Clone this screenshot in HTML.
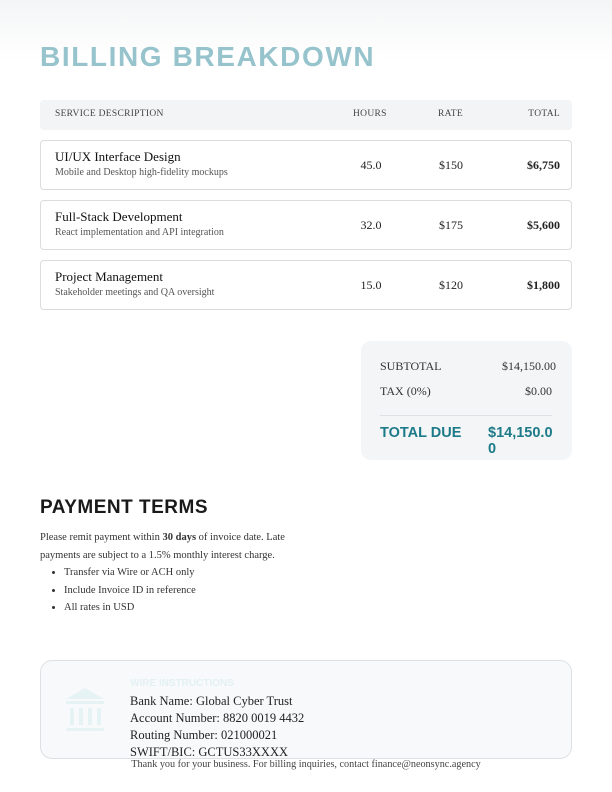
<!DOCTYPE html><html><head><style>
*{margin:0;padding:0;box-sizing:border-box}
body{width:612px;height:792px;background:linear-gradient(#f4f5f6,#fff 60px,#fff);font-family:"Liberation Serif",serif;color:#222;position:relative;overflow:hidden}
.abs{position:absolute}
h1{position:absolute;left:40px;top:41px;font:bold 28px "Liberation Sans",sans-serif;color:#96c3cc;letter-spacing:1.6px}
.th{left:40px;top:100px;width:532px;height:30px;background:#f3f4f6;border-radius:4px;font-size:9.5px;color:#444;letter-spacing:.3px}
.th span,.row span{position:absolute}
.row{left:40px;width:532px;height:50px;border:1px solid #dcdcdc;border-radius:4px;background:#fff}
.t{left:14px;top:8px;font-size:13px;color:#111}
.s{left:14px;top:26px;font-size:10px;color:#555}
.h{left:300px;width:60px;text-align:center;top:17px;font-size:12px}
.r{left:380px;width:60px;text-align:center;top:17px;font-size:12px}
.to{right:11px;top:17px;font-size:12px;font-weight:bold}
.sum{left:361px;top:341px;width:211px;height:119px;background:#f3f5f7;border-radius:10px}
.sum span{position:absolute;font-size:12px;color:#333}
.td{font:bold 14.5px "Liberation Sans",sans-serif!important;color:#1d7a88!important}
h2{position:absolute;left:40px;top:497px;font:bold 19px "Liberation Sans",sans-serif;color:#1a1a1a;letter-spacing:.5px}
.p{left:40px;top:529px;font-size:10.5px;line-height:17.5px;color:#333;width:285px}
ul{position:absolute;left:64px;top:564px;font-size:10.5px;line-height:17.5px;color:#333}
.w{left:40px;top:660px;width:532px;height:99px;border:1px solid #dde1e5;border-radius:12px;background:#f8f9fb}
</style></head><body>
<h1>BILLING BREAKDOWN</h1>
<div class="abs th"><span style="left:15px;top:9px">SERVICE DESCRIPTION</span><span style="left:313px;top:9px">HOURS</span><span style="left:398px;top:9px">RATE</span><span style="right:12px;top:9px">TOTAL</span></div>
<div class="abs row" style="top:140px"><span class="t">UI/UX Interface Design</span><span class="s">Mobile and Desktop high-fidelity mockups</span><span class="h">45.0</span><span class="r">$150</span><span class="to">$6,750</span></div>
<div class="abs row" style="top:200px"><span class="t">Full-Stack Development</span><span class="s">React implementation and API integration</span><span class="h">32.0</span><span class="r">$175</span><span class="to">$5,600</span></div>
<div class="abs row" style="top:260px"><span class="t">Project Management</span><span class="s">Stakeholder meetings and QA oversight</span><span class="h">15.0</span><span class="r">$120</span><span class="to">$1,800</span></div>
<div class="abs sum">
<span style="left:19px;top:18px">SUBTOTAL</span><span style="right:16px;top:18px">$14,150.00</span>
<span style="left:19px;top:43px">TAX (0%)</span><span style="right:20px;top:43px">$0.00</span>
<div class="abs" style="left:19px;top:74px;width:172px;height:1px;background:#dde1e5"></div>
<span class="td" style="left:19px;top:84px">TOTAL DUE</span><span class="td" style="left:127px;top:84px;width:68px;line-height:17px;word-break:break-all">$14,150.00</span>
</div>
<h2>PAYMENT TERMS</h2>
<div class="abs p">Please remit payment within <b>30 days</b> of invoice date. Late payments are subject to a 1.5% monthly interest charge.</div>
<ul><li>Transfer via Wire or ACH only</li><li>Include Invoice ID in reference</li><li>All rates in USD</li></ul>
<div class="abs w">
<svg class="abs" style="left:23px;top:25px" width="42" height="48" viewBox="0 0 42 48"><path d="M21 2 L40 13 H2 Z" fill="#e6f3f5"/><rect x="2" y="15" width="38" height="3" fill="#e6f3f5"/><rect x="6" y="22" width="4" height="17" fill="#e6f3f5"/><rect x="15" y="22" width="4" height="17" fill="#e6f3f5"/><rect x="24" y="22" width="4" height="17" fill="#e6f3f5"/><rect x="33" y="22" width="4" height="17" fill="#e6f3f5"/><rect x="2" y="42" width="38" height="3" rx="1.5" fill="#e6f3f5"/></svg>
<div class="abs" style="left:89px;top:17px;font:bold 10px 'Liberation Sans',sans-serif;color:#e3f1f3">WIRE INSTRUCTIONS</div>
<div class="abs" style="left:89px;top:32px;font-size:12.5px;line-height:17px;color:#222">Bank Name: Global Cyber Trust<br>Account Number: 8820 0019 4432<br>Routing Number: 021000021<br>SWIFT/BIC: GCTUS33XXXX</div>
</div>
<div class="abs" style="left:0;width:612px;top:759px;text-align:center;font-size:10.2px;color:#444">Thank you for your business. For billing inquiries, contact finance@neonsync.agency</div>
</body></html>
